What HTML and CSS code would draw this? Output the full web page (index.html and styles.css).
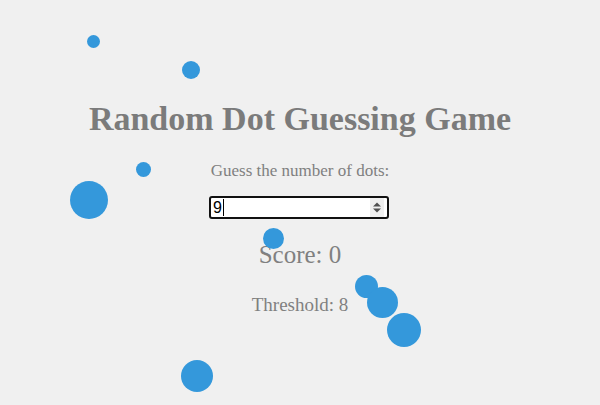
FILE: index.html
```html
<!DOCTYPE html>
<html lang="en">
<head>
<meta charset="utf-8">
<title>Random Dot Guessing Game</title>
<link rel="stylesheet" href="styles.css">
</head>
<body>
<main class="game">
  <h1 class="title">Random Dot Guessing Game</h1>
  <p class="prompt">Guess the number of dots:</p>
  <div class="guess-box" role="spinbutton" aria-valuenow="9">
    <span class="guess-value">9</span><span class="caret"></span>
    <span class="spacer"></span>
    <svg class="spinner" width="14" height="19" viewBox="0 0 14 19" aria-hidden="true">
      <rect x="0" y="0" width="14" height="19" fill="#efefef"/>
      <path d="M3 8.5 L7 4.5 L11 8.5 Z" fill="#505050"/>
      <path d="M3 10.5 L7 14.5 L11 10.5 Z" fill="#505050"/>
    </svg>
  </div>
  <p class="score">Score: 0</p>
  <p class="threshold">Threshold: 8</p>
</main>
<div class="dots" aria-hidden="true">
  <span class="dot" style="left:87px;top:35px;width:13px;height:13px"></span>
  <span class="dot" style="left:182px;top:61px;width:18px;height:18px"></span>
  <span class="dot" style="left:135.5px;top:162px;width:15px;height:15px"></span>
  <span class="dot" style="left:69.5px;top:181px;width:38px;height:38px"></span>
  <span class="dot" style="left:263px;top:228px;width:21px;height:21px"></span>
  <span class="dot" style="left:354.5px;top:275px;width:23px;height:23px"></span>
  <span class="dot" style="left:366.5px;top:286.5px;width:31px;height:31px"></span>
  <span class="dot" style="left:387px;top:313px;width:34px;height:34px"></span>
  <span class="dot" style="left:180.5px;top:360px;width:32px;height:32px"></span>
</div>
</body>
</html>
```
FILE: styles.css
```css
html, body {
  margin: 0;
  padding: 0;
}
body {
  background: #f0f0f0;
  width: 600px;
  height: 405px;
  overflow: hidden;
  position: relative;
  font-family: "Liberation Serif", "Times New Roman", serif;
  color: #808080;
}
.game {
  display: flex;
  flex-direction: column;
  align-items: center;
  padding-top: 100px;
  text-align: center;
}
.title {
  margin: 0;
  font-size: 34px;
  line-height: 38px;
  font-weight: bold;
  color: #7b7b7b;
}
.prompt {
  margin: 23px 0 0;
  font-size: 17px;
  line-height: 20px;
}
.guess-box {
  margin: 15px 2px 0 0;
  box-sizing: border-box;
  width: 180px;
  height: 23px;
  border: 2px solid #111;
  border-radius: 3px;
  background: #fff;
  display: flex;
  align-items: center;
  padding: 0 3px 0 2px;
  font-family: "Liberation Sans", Arial, sans-serif;
  font-size: 16px;
  color: #000;
}
.guess-value {
  line-height: 19px;
}
.caret {
  width: 1px;
  height: 17px;
  background: #000;
  margin-left: 1px;
}
.spacer {
  flex: 1;
}
.spinner {
  display: block;
}
.score {
  margin: 22px 0 0;
  font-size: 25px;
  line-height: 28px;
}
.threshold {
  margin: 25px 0 0;
  font-size: 19px;
  line-height: 22px;
}
.dots {
  position: absolute;
  left: 0;
  top: 0;
  width: 600px;
  height: 405px;
  pointer-events: none;
}
.dot {
  position: absolute;
  border-radius: 50%;
  background: #3498db;
}
```
